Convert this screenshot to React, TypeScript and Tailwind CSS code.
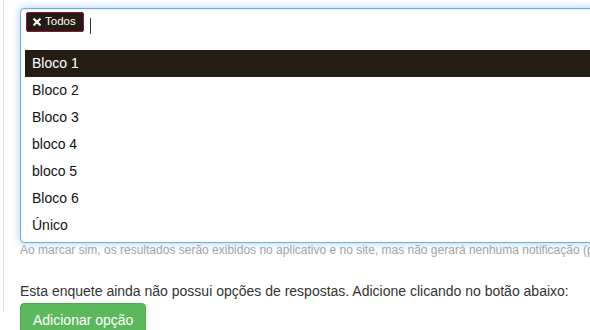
import React from 'react';

const options = ['Bloco 1', 'Bloco 2', 'Bloco 3', 'bloco 4', 'bloco 5', 'Bloco 6', 'Único'];

export default function App() {
  return (
    <div className="w-[590px] h-[330px] overflow-hidden bg-white font-['Liberation_Sans',Arial,sans-serif] text-[#333]">
      <div className="ml-[3px] h-[330px] border-l border-[#ddd] pl-[16px]">
        {/* label cut off above the viewport */}
        <div className="-mt-[18px] h-[26px] whitespace-nowrap pl-[30px] text-[14px] font-bold leading-[20px]">
          Exibir os resultados para quais grupos?
        </div>

        {/* focused multi select */}
        <div className="w-[640px] rounded-[4px] border border-[#66afe9] bg-white shadow-[inset_0_1px_1px_rgba(0,0,0,0.075),0_0_8px_rgba(102,175,233,0.6)]">
          <div className="flex h-[34px] items-start gap-[6px] pl-[5px] pt-[3px]">
            <span className="flex h-[20px] items-center gap-[4px] rounded-[2px] border border-[#8a1446] bg-[#241b12] pl-[6px] pr-[7px] text-[11.5px] leading-none text-white">
              <svg width="8" height="8" viewBox="0 0 8 8">
                <path d="M1.2 1.2 L6.8 6.8 M6.8 1.2 L1.2 6.8" stroke="white" strokeWidth="2.2" strokeLinecap="round" />
              </svg>
              Todos
            </span>
            <span className="mt-[6px] h-[16px] w-px bg-[#333]" />
          </div>
          <ul className="ml-[4px] mt-[7px] pb-[3px]">
            {options.map((o, i) => (
              <li
                key={o}
                className={
                  'flex h-[27px] items-center pl-[7px] text-[14px] ' +
                  (i === 0 ? 'bg-[#251d13] text-white' : 'text-[#111]')
                }
              >
                {o}
              </li>
            ))}
          </ul>
        </div>

        <p className="whitespace-nowrap text-[12px] leading-[14px] text-[#a3a3a3]">
          Ao marcar sim, os resultados serão exibidos no aplicativo e no site, mas não gerará nenhuma notificação (push).
        </p>

        <p className="mt-[24px] whitespace-nowrap text-[14px] leading-[20px] text-[#333]">
          Esta enquete ainda não possui opções de respostas. Adicione clicando no botão abaixo:
        </p>
        <button className="mt-[2px] rounded-[4px] border border-[#4cae4c] bg-[#5cb85c] px-[12px] py-[6px] text-[14px] leading-[20px] text-white">
          Adicionar opção
        </button>
      </div>
    </div>
  );
}
